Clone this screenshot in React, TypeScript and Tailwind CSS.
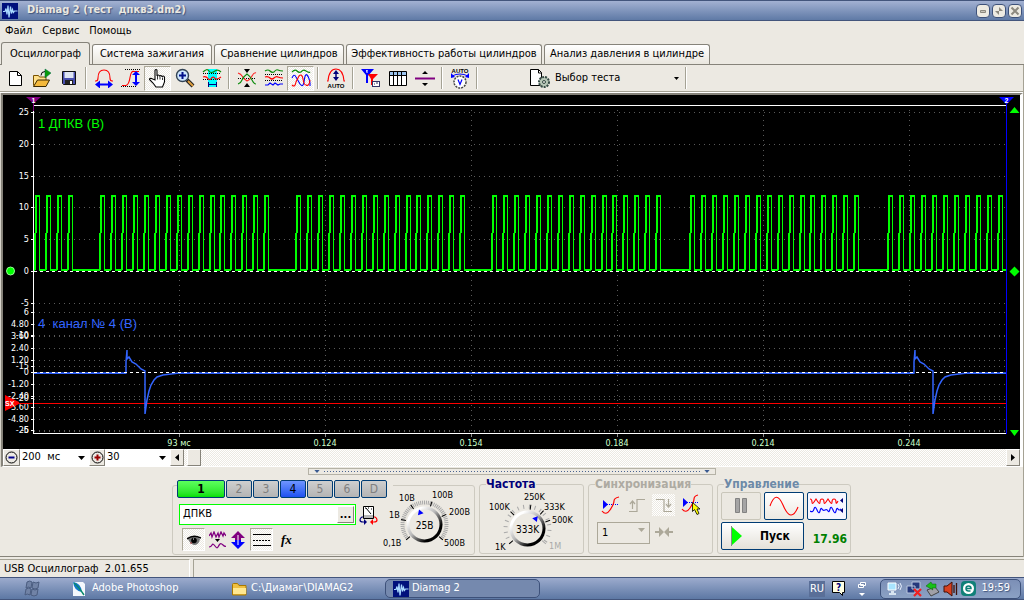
import { FC, ReactNode } from 'react';

const TABS = [
  { label: 'Осциллограф', width: 'w-[89px]' },
  { label: 'Система зажигания', width: 'w-[120px]' },
  { label: 'Сравнение цилиндров', width: 'w-[130px]' },
  { label: 'Эффективность работы цилиндров', width: 'w-[196px]' },
  { label: 'Анализ давления в цилиндре', width: 'w-[166px]' },
];

const CHECKER =
  'bg-[repeating-conic-gradient(#ffffff_0_25%,#ece9e2_0_50%)] bg-[length:2px_2px]';

const Icon: FC<{ w?: number; h?: number; children: ReactNode }> = ({ w = 20, h = 20, children }) => (
  <svg width={w} height={h} viewBox={`0 0 ${w} ${h}`} fill="none" className="shrink-0" aria-hidden="true">
    {children}
  </svg>
);

/* ---------- toolbar icons ---------- */

const NewIcon = () => (
  <Icon>
    <path d="M4.5 3.5h8l4 4v10h-12z" fill="#fff" stroke="#000" />
    <path d="M12.500 3.500v4h4" stroke="#000" />
  </Icon>
);

const OpenIcon = () => (
  <Icon>
    <path d="M1.500 17.500v-10h5l1 1.500h6.500v3" fill="#ffe08a" stroke="#7a5200" />
    <path d="M1.500 18.500l4-6.500h12l-3.500 6.500z" fill="#f4b93c" stroke="#3a2800" />
    <path d="M9 7.500q0-4 4-4" stroke="#000" />
    <path d="M13 1v9l6-5z" fill="#0a9a0a" stroke="#064" strokeWidth=".5" />
  </Icon>
);

const SaveIcon = () => (
  <Icon>
    <path d="M3.500 3.500h13v13h-12l-1-1z" fill="#4a50b0" stroke="#111" />
    <path d="M5.500 4h9v6h-9z" fill="#dfe6f4" />
    <path d="M6 12h8v4h-8z" fill="#222" />
    <path d="M11 13h2v3h-2z" fill="#fff" />
  </Icon>
);

const BellIcon = () => (
  <Icon>
    <path d="M1 13h1q2 0 2-3q0-8 6-8t6 8q0 3 2 3h1" stroke="#f00" strokeWidth="1.100" />
    <path d="M5 16.500h10" stroke="#00f" strokeWidth="2" />
    <path d="M1 16.500l5-4v8zM19 16.500l-5-4v8z" fill="#00f" />
  </Icon>
);

const RiseIcon = () => (
  <Icon>
    <path d="M4 1.500h16M0 18.500h16" stroke="#000" strokeDasharray="1 1" />
    <path d="M1 17.500h4q3-1 4-8t4-6h5" stroke="#f00" strokeWidth="1.100" />
    <path d="M15 6v9" stroke="#00f" strokeWidth="2" />
    <path d="M15 3l4 4h-8zM15 18l4-4h-8z" fill="#00f" />
  </Icon>
);

const HandIcon = () => (
  <Icon>
    <path
      d="M7 12V2.500q0-1 1-1t1 1V8q0-1 1.200-1t1.300 1.500q0-1 1.200-1t1.300 1.500q0-1 1.200-1t1.300 1.500v4.500l-2 5H8l-3-4-3.500-3.500q0-1.500 2-1z"
      fill="#fff"
      stroke="#000"
      strokeWidth="1.100"
    />
    <path d="M9.500 8v3.500M12 8.500v3M14.500 9.500v2.500" stroke="#000" strokeWidth=".8" />
  </Icon>
);

const ZoomIcon = () => (
  <Icon>
    <path d="M12 12l6 6" stroke="#222" strokeWidth="4" />
    <path d="M13 13l5 5" stroke="#e0a040" strokeWidth="2" />
    <circle cx="7.500" cy="7.500" r="6" fill="#cde6ff" stroke="#345" strokeWidth="1.400" />
    <path d="M7.500 4v7M4 7.500h7" stroke="#00108a" strokeWidth="2" />
  </Icon>
);

const MarkerIcon = () => (
  <Icon>
    <path d="M6 1h9v18H6z" fill="#0ff" />
    <path d="M1 4q4-4 6-1t6 0q3-2 6 1" stroke="#0a8a0a" strokeWidth="1.200" />
    <path d="M1 5.500h18M1 11.500h18" stroke="#000" strokeDasharray="1 1" />
    <path d="M1 9q3-1 5 1.500t4-1q2-1 3 1q2 1.500 6-1.500" stroke="#f00" strokeWidth="1.200" />
    <path d="M6.500 14v5M14.500 14v5M7 16.500h7" stroke="#00007a" />
  </Icon>
);

const CrossIcon = () => (
  <Icon>
    <path d="M7 1h6l-3 4zM7 19h6l-3-4z" fill="#000" />
    <path d="M1 10.500h18" stroke="#000" strokeDasharray="1 1" />
    <path d="M1 5q3 1 4 3t5 5q3-1 5-5t4-3" stroke="#f22" strokeWidth="1.100" />
    <path d="M1 16q3-1 4-4t5-6q3 2 5 6t4 4" stroke="#0a8a0a" strokeWidth="1.100" />
  </Icon>
);

const WavesIcon = () => (
  <Icon>
    <path d="M1 3q3-2 5 0t4 1q2-3 4-2t5 1" stroke="#0a8a0a" strokeWidth="1.200" />
    <path d="M1 6.500h18M1 12.500h18" stroke="#000" strokeDasharray="1 1" />
    <path d="M1 9q3-1 5 1t4 0q2-2 4-1t5 1" stroke="#f00" strokeWidth="1.200" />
    <path d="M1 17h3l2-2 3 2 2-2 3 2 2-1h3" stroke="#00f" strokeWidth="1.200" />
  </Icon>
);

const OverlayIcon = () => (
  <Icon>
    <path d="M1 4q3-3 5-1t4 1q2-3 5-1t4 1" stroke="#0a8a0a" strokeWidth="1.200" />
    <path d="M1 10q2-5 4-1l4 7q3 4 4-2q1-9 3-7t3 8v3" stroke="#00f" strokeWidth="1.100" />
    <path d="M1 17q3 3 4-3l3-6q3-3 4 3t3 6q3 2 4-5" stroke="#f00" strokeWidth="1.100" />
  </Icon>
);

const AutoBellIcon = () => (
  <Icon>
    <path d="M1 13h1q1-12 8-12t8 12h1" stroke="#f00" strokeWidth="1.100" />
    <path d="M10 4v7" stroke="#00007a" strokeWidth="1.500" />
    <path d="M10 2l3 4H7zM10 13l3-4H7z" fill="#00007a" />
    <text x="10" y="20" textAnchor="middle" className="fill-black font-[Liberation_Sans] text-[6px] font-bold">AUTO</text>
  </Icon>
);

const TriggerIcon = () => (
  <Icon>
    <path d="M0 1h13L7 8v7H5V7z" fill="#00f" />
    <path d="M7 6h10l-5 5v6h-2v-6z" fill="#f00" />
    <path d="M6 2v3M5.500 3.500L6 2" stroke="#fff" />
    <rect x="11.500" y="13.500" width="7" height="5" fill="#fff" stroke="#336" />
    <path d="M13 16h1M15 15h2" stroke="#336" />
  </Icon>
);

const TableIcon = () => (
  <Icon>
    <path d="M1.500 3.500h17v14h-17z" fill="#fff" stroke="#000" />
    <path d="M2 4h16v3H2z" fill="#9cc4ee" />
    <path d="M1.500 7.500h17M5.500 4v13M9.500 4v13M13.500 4v13" stroke="#000" />
  </Icon>
);

const LevelIcon = () => (
  <Icon>
    <path d="M10 3l3 3H7zM10 18l3-3H7z" fill="#000" />
    <path d="M0 10.500h20" stroke="#800080" strokeWidth="2" />
  </Icon>
);

const AutoDialIcon = () => (
  <Icon h={22}>
    <text x="10" y="6" textAnchor="middle" className="fill-black font-[Liberation_Sans] text-[6px] font-bold">AUTO</text>
    <path d="M2 9q8-4 16 0" stroke="#00f" />
    <circle cx="10" cy="15" r="6" fill="#fff" stroke="#444" strokeWidth="1.500" strokeDasharray="2 1" />
    <path d="M8 12.500l2 5 2-5" stroke="#00f" strokeWidth="1.200" />
    <path d="M1 6v5l4-1zM19 6v5l-4-1z" fill="#00f" />
  </Icon>
);

const TestIcon = () => (
  <Icon>
    <path d="M.5 1.500h8l3 3v13H.5z" fill="#fff" stroke="#000" />
    <path d="M8.500 1.500v3.500h3" stroke="#000" />
    <circle cx="14" cy="14" r="5" fill="#b8c8b8" stroke="#344a44" strokeWidth="2" strokeDasharray="2 1" />
    <circle cx="14" cy="14" r="1.500" fill="#ece9e2" stroke="#344a44" />
  </Icon>
);

const Arrow: FC<{ className: string; color?: string }> = ({ className, color = '#000' }) => (
  <svg width="7" height="4" viewBox="0 0 7 4" className={className} aria-hidden="true">
    <path d="M0 0h7L3.500 4z" fill={color} />
  </svg>
);

const AppIcon = () => (
  <Icon w={16} h={16}>
    <path d="M0 0h16v16H0z" fill="#00107c" />
    <path d="M1 8.500h2l1-3 1 6 1-9 1 12 1.500-11 1 7 1-4 1 3 1-1.500h3" stroke="#a8d8ff" strokeWidth="1.200" />
  </Icon>
);

const ToolButton: FC<{ label: string; pressed?: boolean; children: ReactNode }> = ({ label, pressed, children }) => (
  <button
    aria-label={label}
    className={`flex h-[25px] w-[27px] items-center justify-center ${pressed ? `border border-t-[#aca899] border-l-[#aca899] border-r-white border-b-white ${CHECKER}` : ''}`}
  >
    {children}
  </button>
);

const Separator = () => (
  <div className="flex w-2 justify-center">
    <div className="h-[22px] w-[2px] border-l border-[#a5a294] bg-white" />
  </div>
);

/* ---------- header ---------- */

const TitleBar = () => (
  <header className="flex h-[21px] items-center border-t border-b border-[#43557c] bg-linear-to-b from-[#a3b1d2] to-[#5f7aa6] pr-[2px] pl-[2px]">
    <AppIcon />
    <h1 className="ml-[9px] text-[11px] font-bold whitespace-pre text-[#ebe8e0] [text-shadow:1px_1px_1px_#40557c]">
      {'Diamag 2 (тест  дпкв3.dm2)'}
    </h1>
    <div className="ml-auto flex gap-[2px]">
      <button aria-label="Свернуть" className="flex h-[14px] w-[14px] items-center justify-center rounded-[4px] border border-[#3d517a] bg-[#edeae2]">
        <Icon w={8} h={8}><path d="M1.500 3.500h5v2h-5z" fill="#c8c4ba" stroke="#8d897f" /></Icon>
      </button>
      <button aria-label="Восстановить" className="flex h-[14px] w-[14px] items-center justify-center rounded-[4px] border border-[#3d517a] bg-[#edeae2]">
        <Icon w={8} h={8}><path d="M4 0v4h4zM4 8V4H0z" fill="#8d897f" /></Icon>
      </button>
      <button aria-label="Закрыть" className="flex h-[14px] w-[14px] items-center justify-center rounded-[4px] border border-[#3d517a] bg-[#edeae2]">
        <Icon w={10} h={10}><path d="M1.500 1.500l7 7M8.500 1.500l-7 7" stroke="#8d897f" strokeWidth="2" /></Icon>
      </button>
    </div>
  </header>
);

const Menu = () => (
  <nav className="flex h-[21px] items-center gap-[10px] pl-[5px] text-[11px]">
    <button>Файл</button>
    <button>Сервис</button>
    <button>Помощь</button>
  </nav>
);

const Tabs = () => (
  <div role="tablist" className="flex h-[23px] items-end gap-[2px] border-b border-[#86837a] pl-px text-[11px]">
    {TABS.map((tab, i) => (
      <button
        key={tab.label}
        role="tab"
        aria-selected={i === 0}
        className={`rounded-t-[3px] border border-b-0 border-[#86837a] whitespace-nowrap ${tab.width} ${
          i === 0 ? '-mb-px h-[23px] bg-[#ece9e2]' : 'h-[20px] bg-linear-to-b from-white to-[#e9e6de]'
        }`}
      >
        {tab.label}
      </button>
    ))}
  </div>
);

const Toolbar = () => (
  <div className="flex h-[26px] items-center pl-px">
    <ToolButton label="Новый"><NewIcon /></ToolButton>
    <ToolButton label="Открыть"><OpenIcon /></ToolButton>
    <ToolButton label="Сохранить"><SaveIcon /></ToolButton>
    <Separator />
    <ToolButton label="Длительность"><BellIcon /></ToolButton>
    <ToolButton label="Амплитуда"><RiseIcon /></ToolButton>
    <ToolButton label="Рука" pressed><HandIcon /></ToolButton>
    <ToolButton label="Увеличить"><ZoomIcon /></ToolButton>
    <ToolButton label="Маркеры"><MarkerIcon /></ToolButton>
    <Separator />
    <ToolButton label="Совместить"><CrossIcon /></ToolButton>
    <ToolButton label="Разнести"><WavesIcon /></ToolButton>
    <ToolButton label="Наложить" pressed><OverlayIcon /></ToolButton>
    <Separator />
    <ToolButton label="Автомасштаб"><AutoBellIcon /></ToolButton>
    <Separator />
    <ToolButton label="Линейки"><TriggerIcon /></ToolButton>
    <ToolButton label="Таблица"><TableIcon /></ToolButton>
    <ToolButton label="Уровень"><LevelIcon /></ToolButton>
    <Separator />
    <ToolButton label="Автонастройка"><AutoDialIcon /></ToolButton>
    <Separator />
    <button className="ml-[49px] flex w-[152px] items-center text-[11px]">
      <TestIcon />
      <span className="ml-[5px]">Выбор теста</span>
      <Arrow className="mr-[3px] ml-auto h-[3px] w-[5px]" />
    </button>
    <Separator />
  </div>
);

/* ---------- oscillogram ---------- */

const GRID_X = [179, 325, 471, 617, 763, 909];
const GRID_Y = [112, 144, 176, 207, 239, 303, 312, 324, 335, 336, 348, 360, 366, 384, 396, 399, 407, 419, 430, 431];
const Y_LABELS: [number, string][] = [
  [112, '25'], [144, '20'], [176, '15'], [207, '10'], [239, '5'], [271, '0'], [303, '-5'],
  [312, '6'], [324, '4.80'], [335, '-10'], [336, '3.60'], [348, '2.40'], [360, '1.20'], [366, '-15'],
  [372, '0'], [384, '-1.20'], [396, '-2.40'], [398, '-20'], [407, '-3.60'], [419, '-4.80'], [430, '-25'], [430, '-6'],
];
const X_LABELS = ['93 мс', '0.124', '0.154', '0.184', '0.214', '0.244'];

// 18 tooth pitches per turn, the last two teeth are missing
const TEETH: number[] = [];
[-96, 100, 296, 492, 690, 888].forEach((start) => {
  for (let i = 0; i < 16; i++) {
    const x = Math.round(start + i * 10.95);
    if (x > 34 && x < 1001) TEETH.push(x);
  }
});

const risePath = TEETH.map((x) => `M${x} 270V233M${x + 1} 233V196H${x + 5}`).join('');
const fallPath = TEETH.map((x) => `M${x + 4}.5 196V270`).join('');
const basePath =
  TEETH.map((x, i) => `M${i ? TEETH[i - 1] + 4 : 34} 270H${x}`).join('') + `M${TEETH[TEETH.length - 1] + 4} 270H1006`;

const kick = (x: number) =>
  `H${x}V362L${x + 1} 350V359L${x + 3} 357L${x + 6} 362L${x + 10} 364L${x + 15} 369L${x + 19} 371V414` +
  `L${x + 21} 400L${x + 23} 391L${x + 25} 385L${x + 28} 380L${x + 31} 377L${x + 37} 375L${x + 45} 374L${x + 53} 373`;

const Scope = () => (
  <div className="border-t-2 border-r-3 border-l-2 border-t-[#86837a] border-r-white border-l-[#86837a] bg-black">
    <svg viewBox="3 95 1017 354" className="block h-auto w-full" role="img" aria-label="Осциллограмма">
      <g stroke="#5a5a5a" strokeDasharray="1 4" shapeRendering="crispEdges">
        {GRID_X.map((x) => <path key={x} d={`M${x}.5 110V433`} />)}
        {GRID_Y.map((y) => <path key={y} d={`M34 ${y}.5H1006`} />)}
      </g>
      <g fill="none" stroke="#0f0" strokeWidth="2" shapeRendering="crispEdges">
        <path d={risePath} />
        <path d={basePath} />
        <path d={fallPath} strokeWidth="1" />
      </g>
      <path d="M34 403.500H1006" stroke="#f00" shapeRendering="crispEdges" />
      <path d={`M34 373${kick(126)}${kick(914)}H1006`} fill="none" stroke="#3264ff" strokeWidth="1.500" />
      <path d="M34 271.500H1006M34 372.500H1006" stroke="#fff" strokeDasharray="3 3" shapeRendering="crispEdges" />
      <path d="M34 373.500H126M179 373.500H914M967 373.500H1006" stroke="#3264ff" shapeRendering="crispEdges" />
      <g stroke="#fff" shapeRendering="crispEdges">
        <path d="M33.500 105V434M33 105.500H1006M33 433.500H1006" />
        {Y_LABELS.map(([y, t]) => <path key={t + y} d={`M31 ${y}.5H34`} />)}
        {GRID_X.map((x) => <path key={x} d={`M${x}.5 434V437`} stroke="#888" />)}
      </g>
      <path d="M1006.500 98V434" stroke="#00f" shapeRendering="crispEdges" />
      <path d="M26 97h15l-7 6v8h-1v-8z" fill="#800080" />
      <path d="M999 97h15l-7 7h-1z" fill="#00f" />
      <g className="fill-white font-[Liberation_Sans] text-[7px] font-bold" textAnchor="middle">
        <text x="33.500" y="103">1</text>
        <text x="1006.500" y="103">2</text>
      </g>
      <circle cx="10.500" cy="271" r="4" fill="#0f0" stroke="#9f9" />
      <path d="M1014.500 107l5 6h-10zM1014.500 266.500l5 5-5 5-5-5zM1010 430h9l-4.500 6z" fill="#0f0" />
      <g className="fill-white font-['DejaVu_Sans_Condensed'] text-[9px]" textAnchor="end">
        {Y_LABELS.map(([y, t]) => <text key={t + y} x="29" y={y + 3}>{t}</text>)}
      </g>
      <path d="M5 395l14 7v2l-14 7z" fill="#f00" />
      <path d="M19 403.500H33" stroke="#f00" />
      <text x="5" y="406" className="fill-white font-[Liberation_Sans] text-[7px] font-bold">SX</text>
      <g className="font-[Liberation_Sans] text-[13px]">
        <text x="38" y="128" fill="#0f0">1 ДПКВ (В)</text>
        <text x="38" y="328" fill="#3264ff">{'4\u00a0 канал № 4 (В)'}</text>
      </g>
      <g className="fill-[#ccffcc] font-['DejaVu_Sans_Condensed'] text-[9px]" textAnchor="middle">
        {X_LABELS.map((t, i) => <text key={t} x={GRID_X[i]} y="446">{t}</text>)}
      </g>
    </svg>
  </div>
);

const bevel = 'border border-t-white border-l-white border-r-[#86837a] border-b-[#86837a] bg-[#ece9e2]';

const ScopeBar = () => (
  <div className="flex h-[18px] border-r-3 border-b border-l-2 border-r-white border-b-white border-l-[#86837a] text-[11px]">
    <button aria-label="Меньше" className={`flex w-[17px] items-center justify-center ${bevel}`}>
      <Icon w={13} h={13}>
        <circle cx="6.500" cy="6.500" r="5.500" stroke="#000" />
        <path d="M3.500 6.500h6" stroke="#00008b" strokeWidth="2" />
      </Icon>
    </button>
    <div className="relative w-[69px]">
      <select aria-label="Развёртка" className="h-full w-full appearance-none bg-white pl-[2px]">
        <option>200&nbsp; мс</option>
      </select>
      <Arrow className="pointer-events-none absolute top-[7px] right-[4px]" />
    </div>
    <button aria-label="Больше" className={`flex w-[16px] items-center justify-center ${bevel}`}>
      <Icon w={13} h={13}>
        <circle cx="6.500" cy="6.500" r="5.500" stroke="#000" />
        <path d="M3.500 6.500h6M6.500 3.500v6" stroke="#900" strokeWidth="2" />
      </Icon>
    </button>
    <div className="relative w-[65px]">
      <select aria-label="Масштаб" className="h-full w-full appearance-none bg-white pl-[2px]">
        <option>30</option>
      </select>
      <Arrow className="pointer-events-none absolute top-[7px] right-[4px]" />
    </div>
    <button aria-label="Влево" className={`flex w-[14px] items-center justify-center ${bevel}`}>
      <Icon w={4} h={7}><path d="M4 0v7L0 3.500z" fill="#000" /></Icon>
    </button>
    <div className={`flex grow pl-[3px] ${CHECKER}`}>
      <div className={`w-[14px] ${bevel}`} />
    </div>
    <button aria-label="Вправо" className={`flex w-[14px] items-center justify-center ${bevel}`}>
      <Icon w={4} h={7}><path d="M0 0v7l4-3.500z" fill="#000" /></Icon>
    </button>
  </div>
);

/* ---------- control panels ---------- */

const CHANNELS = ['1', '2', '3', '4', '5', '6', 'D'];

const channelStyle = (ch: string) => {
  if (ch === '1') return 'w-[48px] bg-linear-to-b from-[#5cff5c] to-[#00e000] font-bold text-black';
  if (ch === '4') return 'w-[26px] bg-linear-to-b from-[#6f95ff] to-[#2050f0] text-black';
  return 'w-[26px] bg-linear-to-b from-[#cfcfcf] to-[#b4b4b4] text-[#808080]';
};

interface DialLabel {
  x: number;
  y: number;
  text: string;
  angle: number;
  off?: boolean;
}

const DIAL_VOLT: DialLabel[] = [
  { x: 16, y: 15, text: '10В', angle: -35 },
  { x: 49, y: 12, text: '100В', angle: 18 },
  { x: 6, y: 32, text: '1В', angle: -78 },
  { x: 66, y: 29, text: '200В', angle: 65 },
  { x: 0, y: 60, text: '0,1В', angle: -130 },
  { x: 61, y: 60, text: '500В', angle: 130 },
];

const DIAL_FREQ: DialLabel[] = [
  { x: 38, y: 10, text: '250K', angle: 8 },
  { x: 3, y: 20, text: '100K', angle: -45 },
  { x: 58, y: 20, text: '333K', angle: 42 },
  { x: 66, y: 33, text: '500K', angle: 70 },
  { x: 9, y: 60, text: '1K', angle: -130 },
  { x: 63, y: 59, text: '1M', angle: 130, off: true },
];

const Dial: FC<{ labels: DialLabel[]; value: string; pointer: number; step: number }> = ({ labels, value, pointer, step }) => {
  const ticks: number[] = [];
  for (let a = -130; a <= 130; a += step) ticks.push(a);
  const id = `knob-${value}`;
  return (
    <svg width="90" height="64" viewBox="0 0 90 64" className="shrink-0" role="img" aria-label={value}>
      <defs>
        <linearGradient id={id} x1="0.150" y1="0.150" x2="0.850" y2="0.850">
          <stop offset="0.100" stopColor="#ffffff" />
          <stop offset="0.450" stopColor="#b8b8b8" />
          <stop offset="0.850" stopColor="#000000" />
        </linearGradient>
      </defs>
      <g transform="translate(41.500 38.500)">
        {ticks.map((a) => (
          <path key={a} d="M0 -20V-24" stroke="#a9a9a9" transform={`rotate(${a})`} />
        ))}
        {labels.map((l) => (
          <path key={l.text} d="M0 -19V-24" stroke={l.off ? '#a9a9a9' : '#000'} transform={`rotate(${l.angle})`} />
        ))}
        <circle r="18" fill={`url(#${id})`} />
        <circle r="15" fill="#ece9e2" />
        <path d="M0 -16l3 5h-6z" fill="#00f" transform={`rotate(${pointer})`} />
        <text y="4" textAnchor="middle" className="fill-black text-[10px]">{value}</text>
      </g>
      {labels.map((l) => (
        <text key={l.text} x={l.x} y={l.y} className="text-[9px]" fill={l.off ? '#a9a9a9' : '#000'}>{l.text}</text>
      ))}
    </svg>
  );
};

const ChannelPanel = () => (
  <section className="mt-[9px] flex h-[70px] w-[303px] rounded-[3px] border border-[#cdcac0] pl-1">
    <div className="flex w-[206px] shrink-0 flex-col">
      <div className="-mt-[6px] flex w-[216px] gap-px bg-[#ece9e2]">
        {CHANNELS.map((ch) => (
          <button key={ch} className={`h-[18px] rounded-[2px] border border-[#003c74] text-[12px] leading-[16px] ${channelStyle(ch)}`}>
            {ch}
          </button>
        ))}
      </div>
      <div className="mt-[6px] ml-[2px] flex items-center gap-[3px]">
        <div className="flex h-[21px] w-[177px] shrink-0 border border-[#00ff00] bg-white p-px">
          <input aria-label="Имя канала" defaultValue="ДПКВ" className="w-0 grow pl-[2px] text-[11px]" />
          <button aria-label="Выбрать" className={`w-[17px] text-[11px] leading-[8px] font-bold ${bevel}`}>...</button>
        </div>
        <Icon w={19} h={20}>
          <path d="M4.500 1.500h10v12h-10z" fill="#b8b8b8" stroke="#000" />
          <path d="M5 2h9v8H5z" fill="#fff" />
          <path d="M7 3l5 6M6 3h1M9 3h1M12 4h1" stroke="#000" />
          <path d="M4 12H3q-2 1-2 3t3 2h2" stroke="#00007a" strokeWidth="1.200" />
          <path d="M15 12h1q2 1 2 3t-3 2h-2" stroke="#f00" strokeWidth="1.200" />
          <path d="M5 14l3 3-3 3z" fill="#00007a" />
          <path d="M14 14l-3 3 3 3z" fill="#f00" />
        </Icon>
      </div>
      <div className="mt-[3px] ml-[5px] flex items-center gap-[4px]">
        <button aria-label="Видимость" className={`flex h-[23px] w-[23px] items-center justify-center border border-t-[#aca899] border-l-[#aca899] border-r-white border-b-white ${CHECKER}`}>
          <Icon w={14} h={12}>
            <path d="M1 5q6-5 12 0q-1 6-6 6-4-1-6-6z" fill="#777" />
            <path d="M0 5q6-5 14-1" stroke="#000" strokeWidth="1.500" />
            <circle cx="7" cy="6.500" r="2.800" fill="#000" />
            <path d="M6 5h1" stroke="#fff" />
            <path d="M3 9h2" stroke="#a33" />
          </Icon>
        </button>
        <button aria-label="Фильтр">
          <Icon w={17} h={18}>
            <path d="M0 5l2-3 1 4 2-5 2 5 2-4 1 4 2-5 2 4 1-3 2 3" stroke="#800080" strokeWidth="1.300" />
            <path d="M6 8h5l-2.500 3z" fill="#000" />
            <path d="M0 16q2 0 3-2t3 1 3 1 2-3 3 1 3 1" stroke="#800080" strokeWidth="1.200" />
          </Icon>
        </button>
        <button aria-label="Инверсия">
          <Icon w={16} h={18}>
            <path d="M8 0l7 7h-4v2H5V7H1z" fill="#800080" />
            <path d="M8 18l7-7h-4V9H5v2H1z" fill="#00f" />
            <path d="M8 4v10" stroke="#fff" />
          </Icon>
        </button>
        <button aria-label="Линии" className={`flex h-[23px] w-[23px] items-center justify-center border border-t-[#aca899] border-l-[#aca899] border-r-white border-b-white ${CHECKER}`}>
          <Icon w={18} h={16}>
            <path d="M0 2.500h18M0 13.500h18" stroke="#000" />
            <path d="M0 8.500h18" stroke="#000" strokeDasharray="2 1" />
          </Icon>
        </button>
        <button className="ml-1 font-['Liberation_Serif'] text-[13px] font-bold italic">fx</button>
      </div>
    </div>
    <Dial labels={DIAL_VOLT} value="25В" pointer={-20} step={5} />
  </section>
);

const Group: FC<{ title: string; width: string; color: string; children: ReactNode }> = ({ title, width, color, children }) => (
  <fieldset className={`h-[77px] rounded-[3px] border border-[#cdcac0] ${width}`}>
    <legend className={`ml-[6px] h-[15px] text-[12px] leading-[15px] font-bold ${color}`}>{title}</legend>
    {children}
  </fieldset>
);

const SineIcon = () => (
  <Icon>
    <path d="M4 9.500h14" stroke="#00f" strokeDasharray="1 1" />
    <path d="M2 5l5 4.500L2 14z" fill="#00f" />
    <path d="M1 16q4 5 8-1t4-9 5-4" stroke="#f00" strokeWidth="1.200" />
  </Icon>
);

const SyncPanel = () => (
  <Group title="Синхронизация" width="w-[125px]" color="text-[#aeaba2]">
    <div className="mt-[2px] ml-[11px] flex items-center gap-[5px]">
      <button aria-label="По фронту" className="px-px"><SineIcon /></button>
      <button aria-label="Передний фронт">
        <Icon>
          <path d="M2 16.500h8v-12h8" stroke="#aca899" strokeWidth="1.200" />
          <path d="M5.500 14V6M3 9l2.500-3L8 9" stroke="#aca899" strokeWidth="1.200" />
        </Icon>
      </button>
      <button aria-label="Задний фронт" className={`flex h-[22px] w-[23px] items-center justify-center ${CHECKER}`}>
        <Icon>
          <path d="M2 4.500h8v12h8" stroke="#aca899" strokeWidth="1.200" />
          <path d="M14.500 4v8M12 9l2.500 3L17 9" stroke="#aca899" strokeWidth="1.200" />
        </Icon>
      </button>
      <button aria-label="Указать" className="px-px">
        <Icon h={22}>
          <path d="M4 8.500h14" stroke="#00f" strokeDasharray="1 1" />
          <path d="M2 4l5 4.500L2 13z" fill="#00f" />
          <path d="M1 15q4 5 8-1t4-9 4-4" stroke="#f00" strokeWidth="1.200" />
          <path d="M11.500 8.500v9l2-2 2.500 5 2-1-2-4.500h3z" fill="#ff0" stroke="#000" strokeWidth=".8" />
        </Icon>
      </button>
    </div>
    <div className="mt-[3px] ml-2 flex items-center gap-[5px]">
      <div className="relative w-[53px]">
        <select aria-label="Канал синхронизации" className="h-[22px] w-full appearance-none border border-[#aca899] pl-1 text-[11px]">
          <option>1</option>
        </select>
        <Arrow className="pointer-events-none absolute top-[9px] right-[5px]" color="#aca899" />
      </div>
      <Icon w={18} h={10}>
        <path d="M0 5h5M13 5h5" stroke="#aca899" strokeWidth="2" />
        <path d="M4 0v10l5-5zM14 0v10L9 5z" fill="#aca899" />
      </Icon>
    </div>
  </Group>
);

const ControlPanel = () => (
  <Group title="Управление" width="w-[134px]" color="text-[#6d8aa8]">
    <div className="ml-[3px] grid grid-cols-[40px_40px_40px] gap-x-[3px] gap-y-[2px]">
      <button aria-label="Пауза" className="flex h-[28px] items-center justify-center rounded-[2px] border border-[#c9c6ba] bg-[#ebe8e1]">
        <Icon w={12} h={16}>
          <path d="M.5 .5h4v14h-4zM7.500 .5h4v14h-4z" fill="#a5a5a5" stroke="#828282" />
        </Icon>
      </button>
      <button aria-label="Синус" className="flex h-[28px] items-center justify-center rounded-[2px] border border-[#003c74] bg-linear-to-b from-white to-[#ece9e2]">
        <Icon w={30} h={20}>
          <path d="M1 10Q7-7 14 9Q22 28 29 11" stroke="#f00" strokeWidth="1.100" />
        </Icon>
      </button>
      <button aria-label="Потоки" className="flex h-[28px] items-center justify-center rounded-[2px] border border-[#003c74] bg-[#f6f6ff]">
        <Icon w={34} h={20}>
          <path d="M0 3q2 0 2 3t2 0 2-3 2 3 2 0 2-3 2 3 2 0 2-3 2 3 2 0 2-3 2 3 2-1" stroke="#f00" strokeWidth="1.100" />
          <path d="M0 15q3 2 4-2t3 1 3 1 2-2 3 1 3 1 2-2 3 1 3 1 2-2 3 0" stroke="#00f" strokeWidth="1.100" />
          <path d="M33 2v5l-3-2.500zM33 12v5l-3-2.500z" fill="#00007a" />
        </Icon>
      </button>
      <button className="col-span-2 flex h-[28px] items-center rounded-[2px] border border-[#003c74] bg-linear-to-b from-white to-[#e4e1d9] pl-[9px] text-[12px] font-bold">
        <Icon w={12} h={20}>
          <path d="M1 1v18l10-9z" fill="#0f0" />
          <path d="M.5 0v20" stroke="#888" />
        </Icon>
        <span className="ml-[17px]">Пуск</span>
      </button>
      <output className="self-center pt-[6px] text-right text-[12px] font-bold text-[#008000]">17.96</output>
    </div>
  </Group>
);

const Panels = () => (
  <div className="flex grow flex-col items-center border-b border-[#86837a] pt-px">
    <div className="flex h-[7px] w-[408px] items-center gap-1 border border-[#b5b2a6] px-[5px]">
      <Arrow className="h-[3px] w-[6px]" color="#3a5a90" />
      <div className="h-px grow bg-[repeating-linear-gradient(90deg,#4a6490_0_1px,transparent_1px_3px)]" />
      <Arrow className="h-[3px] w-[6px]" color="#3a5a90" />
    </div>
    <div className="flex items-start gap-[4px] pt-px">
      <ChannelPanel />
      <div className="mt-px">
        <Group title="Частота" width="w-[105px]" color="text-[#00007a]">
          <div className="-mt-[2px] ml-[6px]">
            <Dial labels={DIAL_FREQ} value="333K" pointer={40} step={15} />
          </div>
        </Group>
      </div>
      <div className="mt-px"><SyncPanel /></div>
      <div className="mt-px"><ControlPanel /></div>
    </div>
  </div>
);

/* ---------- footer ---------- */

const StatusBar = () => (
  <div className="flex h-[20px] gap-[3px] pt-[2px] text-[11px]">
    <div className="w-[190px] border-t border-r border-t-[#a5a294] border-r-white pl-1 leading-[17px] whitespace-pre">
      {'USB Осциллограф  2.01.655'}
    </div>
    <div className="grow border-t border-l border-[#a5a294]" />
  </div>
);

const Taskbar = () => (
  <footer className="flex h-[23px] items-center border-t border-b border-[#43557c] bg-linear-to-b from-[#9cabcd] to-[#5d78a4] text-[11px] text-white [text-shadow:1px_1px_1px_#40557c]">
    <button aria-label="Пуск Windows" className="ml-[23px]">
      <Icon w={17} h={17}>
        <path d="M4 2q3-2 5 0L8 8q-3-2-5 0zM10 2q3 2 6 0l-1 6q-3 2-6 0zM3 9q3-2 5 0l-1 6q-3-2-5 0zM9 9q3 2 6 0l-1 6q-3 2-6 0z" fill="#7183a6" stroke="#4b5d80" />
      </Icon>
    </button>
    <button className="ml-[32px] flex w-[160px] items-center gap-[6px]">
      <Icon w={14} h={16}>
        <path d="M1 1h10l2 2v12H1z" fill="#f4f8fc" />
        <path d="M1 1q8 1 9 10q-8-1-9-10z" fill="#1478c8" />
        <path d="M2 2q4 3 10 12" stroke="#0a8a6a" strokeWidth="1.500" />
      </Icon>
      Adobe Photoshop
    </button>
    <button className="flex w-[153px] items-center gap-[4px]">
      <Icon w={15} h={14}>
        <path d="M.5 13V2.500q0-1 1-1h4l1.500 2h7v9.500z" fill="#f0c040" stroke="#a87800" />
        <path d="M1 6h13v6H1z" fill="#ffe890" />
      </Icon>
      C:\Диамаг\DIAMAG2
    </button>
    <button className="flex h-[19px] w-[155px] items-center gap-[3px] rounded-[5px] border border-[#3d517a] bg-[#7589ae] pl-[7px]">
      <AppIcon />
      Diamag 2
    </button>
    <button className="ml-auto h-[16px] w-[16px] bg-[#5a6f98]">RU</button>
    <button aria-label="Справка" className="ml-[7px]">
      <Icon w={14} h={15}>
        <path d="M.5 .5h12v11h-2v3l-3-3h-7z" fill="#ffffe4" stroke="#000" />
        <text x="6.500" y="10" textAnchor="middle" className="fill-[#00007a] text-[10px] font-bold [text-shadow:none]">?</text>
      </Icon>
    </button>
    <button aria-label="Языковая панель" className="mr-[13px] ml-[11px]">
      <Icon w={10} h={16}>
        <path d="M3.500 1.500h5v3h-5zM1.500 3.500h5v3h-5z" fill="#7589ae" stroke="#fff" />
        <path d="M2 12h6l-3 3z" fill="#fff" />
      </Icon>
    </button>
    <div className="mr-[3px] flex h-[20px] w-[141px] items-center gap-[3px] rounded-[5px] border border-[#3d517a] bg-linear-to-b from-[#7c8fb6] to-[#8ba1c4] pl-[6px]">
      <Icon w={16} h={16}>
        <path d="M1 2h8v7H1z" fill="#a8e4ff" stroke="#fff" />
        <path d="M4 10h3v2H4zM2 12h7v2H2z" fill="#d8e4f0" />
        <path d="M11 3q2 2 0 5M13 2q3 3 0 7" stroke="#e8f0ff" />
      </Icon>
      <Icon w={16} h={16}>
        <path d="M6 1h8v7H6zM1 5h8v7H1z" fill="#24387c" stroke="#b8c4dc" />
        <path d="M8 8l7 7M15 8l-7 7" stroke="#f02020" strokeWidth="2.200" />
      </Icon>
      <Icon w={15} h={16}>
        <path d="M2 9l8-3 4 5-8 4z" fill="#a0a0a8" stroke="#444" />
        <path d="M1 5l5-4 1 2h4v4H7l1 2z" fill="#18c018" stroke="#086008" strokeWidth=".5" />
      </Icon>
      <Icon w={15} h={16}>
        <path d="M1 5h3l5-4v14l-5-4H1z" fill="#d84020" stroke="#401008" />
        <path d="M11 4v8M13.500 2v12" stroke="#401008" strokeWidth="1.300" />
      </Icon>
      <Icon w={15} h={15}>
        <rect width="15" height="15" rx="4" fill="#108078" />
        <circle cx="7.500" cy="7.500" r="5.500" fill="#fff" />
        <path d="M5 7.500h5q0-2.500-2.500-2.500T5 7.500t2.500 2.500h2" stroke="#108078" strokeWidth="1.500" />
      </Icon>
      <time className="ml-auto pr-[10px]">19:59</time>
    </div>
  </footer>
);

export default function App() {
  return (
    <div className="flex min-h-screen flex-col bg-[#ece9e2] font-['DejaVu_Sans_Condensed','DejaVu_Sans',sans-serif] text-black">
      <TitleBar />
      <Menu />
      <Tabs />
      <div className="flex grow flex-col border-r border-[#a5a294]">
        <Toolbar />
        <div className="h-[2px] border-t border-[#a5a294] bg-white" />
        <div className="border-l border-[#d8d5cb]">
          <Scope />
          <ScopeBar />
        </div>
        <Panels />
      </div>
      <StatusBar />
      <Taskbar />
    </div>
  );
}
